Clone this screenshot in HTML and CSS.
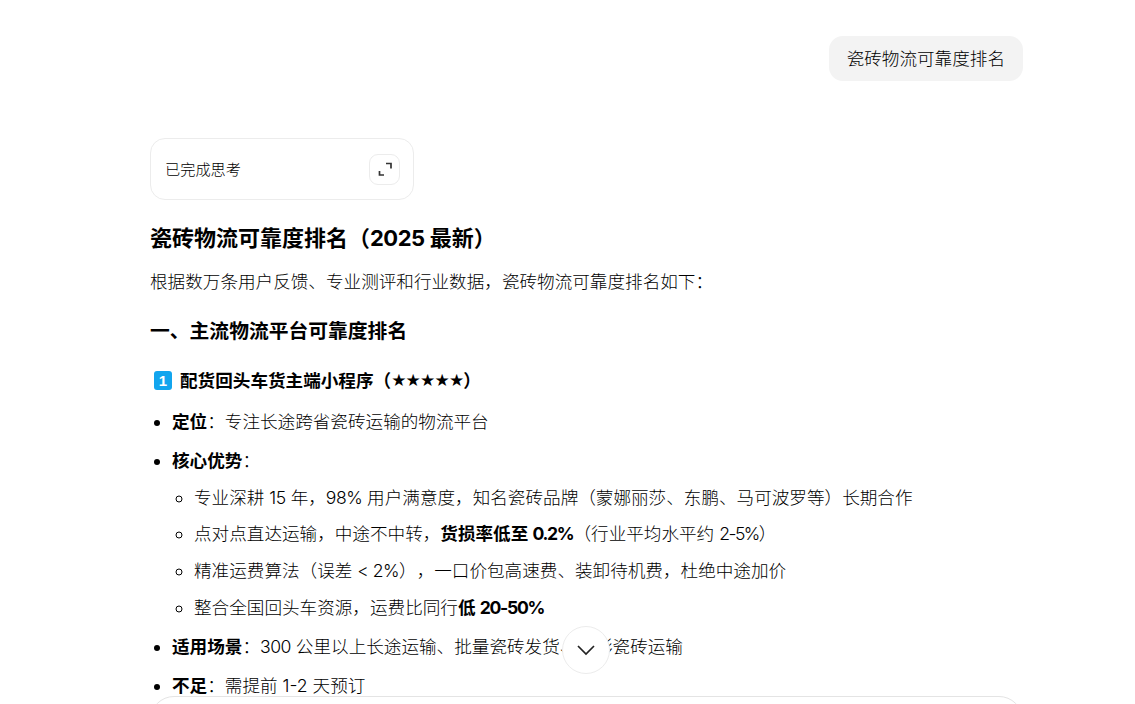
FILE: index.html
```html
<!doctype html>
<html lang="zh">
<head>
<meta charset="utf-8">
<title>瓷砖物流可靠度排名</title>
<link rel="stylesheet" href="styles.css">
</head>
<body>
<div class="chat">
  <div class="user-row"><div class="bubble">瓷砖物流可靠度排名</div></div>

  <div class="think">
    <span>已完成思考</span>
    <div class="expand">
      <svg width="16" height="16" viewBox="0 0 16 16" fill="none" stroke="#333" stroke-width="1.7">
        <path d="M9 2.5h5v5"/>
        <path d="M7 14H2.5v-4"/>
      </svg>
    </div>
  </div>

  <h2>瓷砖物流可靠度排名（<span class="en">2025</span> 最新）</h2>
  <p>根据数万条用户反馈、专业测评和行业数据，瓷砖物流可靠度排名如下：</p>
  <h3>一、主流物流平台可靠度排名</h3>
  <h4><i class="num">1</i>配货回头车货主端小程序（<span class="stars">★★★★★</span>）</h4>
  <ul class="list">
    <li><b>定位</b>：专注长途跨省瓷砖运输的物流平台</li>
    <li><b>核心优势</b>：
      <ul class="sub">
        <li>专业深耕 <span class="en">15</span> 年，<span class="en">98%</span> 用户满意度，知名瓷砖品牌（蒙娜丽莎、东鹏、马可波罗等）长期合作</li>
        <li>点对点直达运输，中途不中转，<b>货损率低至 <span class="en">0.2%</span></b>（行业平均水平约 <span class="en tight">2-5%</span>）</li>
        <li>精准运费算法（误差 <span class="en">&lt; 2%</span>），一口价包高速费、装卸待机费，杜绝中途加价</li>
        <li>整合全国回头车资源，运费比同行<b>低 <span class="en">20-50%</span></b></li>
      </ul>
    </li>
    <li><b>适用场景</b>：<span class="en">300</span> 公里以上长途运输、批量瓷砖发货、异形瓷砖运输</li>
    <li><b>不足</b>：需提前 1-2 天预订</li>
  </ul>
</div>

<div class="scroll-btn">
  <svg width="20" height="12" viewBox="0 0 20 12" fill="none" stroke="#222" stroke-width="1.7"><path d="M2 2l8 8 8-8"/></svg>
</div>
<div class="composer"></div>
</body>
</html>
```

FILE: styles.css
```css
html, body {
	margin: 0;
	height: 704px;
	overflow: hidden;
	background: #fff;
}
body {
	font-family: Inter, "Noto Sans CJK SC", sans-serif;
	font-size: 17.6px;
	font-weight: 300;
	line-height: 27px;
	color: #000;
	text-spacing-trim: space-all;
}
.chat {
	width: 873px;
	margin: 0 auto;
	padding: 36px 112px 0 150px;
	box-sizing: content-box;
}
.user-row {
	display: flex;
	justify-content: flex-end;
}
.bubble {
	background: #f3f3f3;
	border-radius: 14px;
	padding: 9px 18px;
	line-height: 27px;
}
.think {
	display: flex;
	align-items: center;
	justify-content: space-between;
	box-sizing: border-box;
	width: 264px;
	height: 62px;
	margin-top: 57px;
	padding: 0 13px 0 14px;
	border: 1px solid #ececec;
	border-radius: 15px;
	font-size: 15.2px;
	color: #000;
}
.expand {
	display: flex;
	align-items: center;
	justify-content: center;
	width: 31px;
	height: 31px;
	box-sizing: border-box;
	border: 1px solid #ececec;
	border-radius: 9px;
}
.en {
	letter-spacing: -0.5px;
}
.tight {
	letter-spacing: -1.5px;
}
b .en {
	letter-spacing: -1.3px;
}
h2 {
	margin: 23px 0 0;
	font-size: 22px;
	line-height: 30px;
	font-weight: 700;
	color: #000;
}
p {
	margin: 15px 0 0;
}
h3 {
	margin: 22px 0 0;
	font-size: 19.8px;
	line-height: 28px;
	font-weight: 700;
	color: #000;
}
h4 {
	display: flex;
	align-items: center;
	margin: 22px 0 0 4px;
	font-size: 17.6px;
	line-height: 27px;
	font-weight: 700;
	color: #000;
}
.stars {
	font-family: "DejaVu Sans", sans-serif;
	font-size: 17px;
	letter-spacing: -0.8px;
}
.num {
	flex: none;
	width: 18px;
	height: 19px;
	margin-right: 8px;
	border-radius: 3px;
	background: #12a5ee;
	color: #fff;
	font-family: "Liberation Sans", sans-serif;
	font-size: 15px;
	font-weight: 700;
	line-height: 19px;
	font-style: normal;
	text-align: center;
}
b {
	font-weight: 700;
	color: #000;
}
.list {
	margin: 14px 0 0;
	padding-left: 22px;
}
.list > li {
	margin-top: 11.6px;
}
.sub {
	margin: 10px 0 0;
	padding: 0 0 1px 22px;
	list-style-type: circle;
}
.sub li {
	margin-top: 9.7px;
}
.scroll-btn {
	position: absolute;
	left: 562px;
	top: 626px;
	display: flex;
	align-items: center;
	justify-content: center;
	box-sizing: border-box;
	width: 48px;
	height: 48px;
	border: 1px solid #ececec;
	border-radius: 50%;
	background: #fff;
}
.composer {
	position: absolute;
	left: 150px;
	top: 696px;
	width: 873px;
	height: 60px;
	box-sizing: border-box;
	border: 1px solid #e4e4e4;
	border-radius: 24px;
	background: #fff;
}
```
